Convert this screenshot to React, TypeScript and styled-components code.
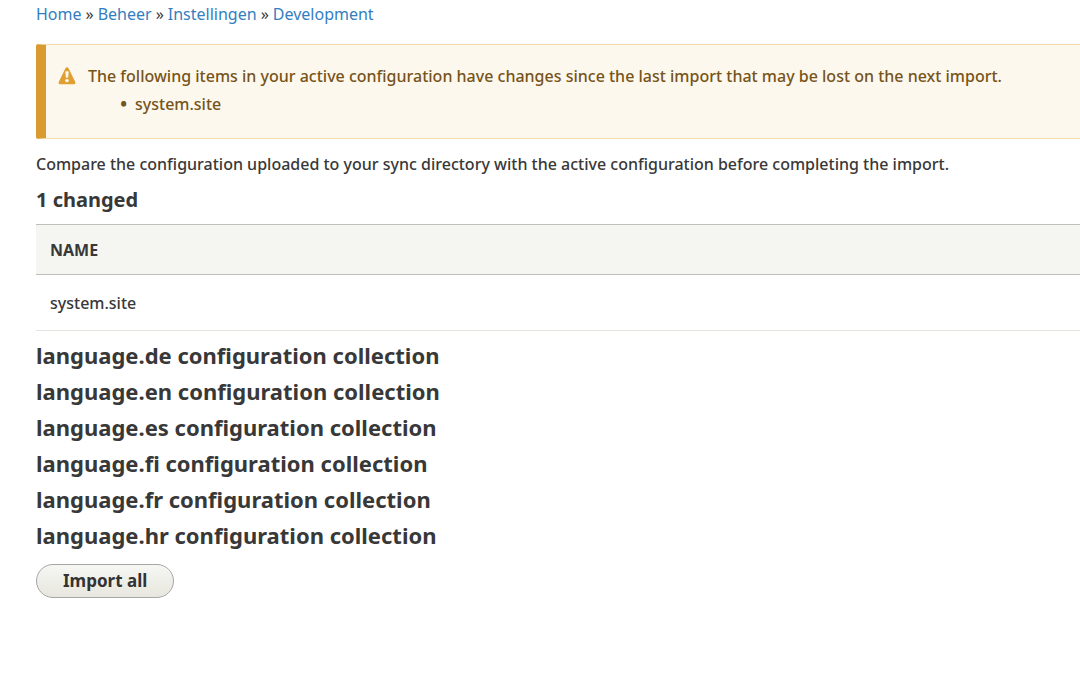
import React from "react";
import styled, { createGlobalStyle } from "styled-components";

const GlobalStyle = createGlobalStyle`
  *, *::before, *::after { box-sizing: border-box; }
  body {
    margin: 0;
    background: #fff;
    color: #383838;
    font-family: "Lucida Grande", "Noto Sans", "Open Sans", sans-serif;
    font-size: 16px;
    line-height: 28px;
  }
`;

const Page = styled.main`
  padding-left: 36px;
  overflow: hidden;
`;

const Trail = styled.ol`
  display: flex;
  margin: 0 0 16px;
  padding: 0;
  list-style: none;
`;

const Crumb = styled.li`
  & + &::before {
    content: "»";
    padding: 0 4px;
  }
`;

const CrumbLink = styled.a`
  color: #337ebf;
  text-decoration: none;
  &:hover { text-decoration: underline; }
`;

const Warning = styled.section`
  display: flex;
  align-items: flex-start;
  gap: 12px;
  padding: 17px 20px 20px 12px;
  border: 1px solid #f4daa6;
  border-left: 10px solid #d99a30;
  border-right: 0;
  border-radius: 2px 0 0 2px;
  background: #fdf8ed;
  color: #76541a;
  font-weight: 500;
`;

const WarningIcon = styled.svg`
  flex: none;
  width: 18px;
  height: 28px;
`;

const WarningItems = styled.ul`
  margin: 0;
  padding-left: 47px;
  list-style-type: "•  ";

  li::marker {
    font-weight: 900;
  }
`;

const Intro = styled.p`
  margin: 11px 0 8px;
  font-weight: 500;
`;

const ChangeHeading = styled.h3`
  margin: 0 0 10px;
  font-size: 20px;
  line-height: 28px;
`;

const ConfigTable = styled.table`
  width: 100%;
  margin-bottom: 6px;
  border-collapse: collapse;
  text-align: left;
`;

const HeadCell = styled.th`
  height: 50px;
  padding: 0 14px;
  border: solid #bfbfba;
  border-width: 1px 0;
  background: #f5f5f2;
  text-transform: uppercase;
`;

const Cell = styled.td`
  height: 56px;
  padding: 0 14px;
  border-bottom: 1px solid #e6e4df;
  font-weight: 500;
`;

const CollectionHeading = styled.h2`
  margin: 0;
  font-size: 22px;
  line-height: 36px;
`;

const ImportButton = styled.button`
  display: block;
  margin-top: 11px;
  padding: 0 26px;
  border: 1px solid #a6a6a6;
  border-radius: 17px;
  background: linear-gradient(to bottom, #f6f6f3, #e7e7df);
  color: #333;
  font-family: inherit;
  font-size: 17px;
  font-weight: 700;
  line-height: 32px;
  cursor: pointer;
`;

const crumbs = ["Home", "Beheer", "Instellingen", "Development"];
const languages = ["de", "en", "es", "fi", "fr", "hr"];

export default function App() {
  return (
    <Page>
      <GlobalStyle />
      <nav aria-label="Breadcrumb">
        <Trail>
          {crumbs.map((name) => (
            <Crumb key={name}>
              <CrumbLink href="#">{name}</CrumbLink>
            </Crumb>
          ))}
        </Trail>
      </nav>
      <Warning>
        <WarningIcon viewBox="0 0 18 28" aria-hidden="true">
          <path
            d="M9 5.2c.6 0 1.1.3 1.4.9l6.9 14c.5 1-.1 2.1-1.3 2.1H2c-1.2 0-1.8-1.1-1.3-2.1l6.9-14C7.9 5.5 8.4 5.2 9 5.2z"
            fill="#e09f33"
          />
          <path
            d="M8 9.2h2c.4 0 .7.3.7.7l-.5 5.1c0 .4-.3.7-.7.7h-1c-.4 0-.7-.3-.7-.7l-.5-5.1c0-.4.3-.7.7-.7z"
            fill="#fdf8ed"
          />
          <ellipse cx="9" cy="18.6" rx="1.9" ry="1.6" fill="#fdf8ed" />
        </WarningIcon>
        <div>
          The following items in your active configuration have changes since the last import that
          may be lost on the next import.
          <WarningItems>
            <li>system.site</li>
          </WarningItems>
        </div>
      </Warning>
      <Intro>
        Compare the configuration uploaded to your sync directory with the active configuration
        before completing the import.
      </Intro>
      <ChangeHeading>1 changed</ChangeHeading>
      <ConfigTable>
        <thead>
          <tr>
            <HeadCell scope="col">Name</HeadCell>
          </tr>
        </thead>
        <tbody>
          <tr>
            <Cell>system.site</Cell>
          </tr>
        </tbody>
      </ConfigTable>
      {languages.map((code) => (
        <CollectionHeading key={code}>language.{code} configuration collection</CollectionHeading>
      ))}
      <ImportButton type="button">Import all</ImportButton>
    </Page>
  );
}
